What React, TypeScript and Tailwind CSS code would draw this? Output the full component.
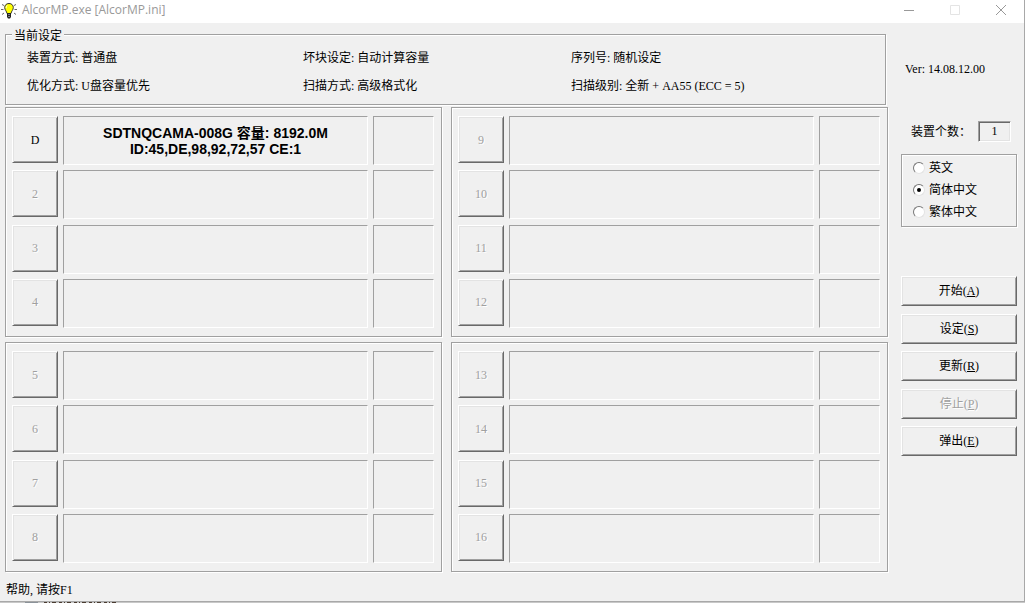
import { useState } from "react";
import type { ReactNode } from "react";

const etched =
  "border border-[#a0a0a0] shadow-[inset_1px_1px_0_#fff,1px_1px_0_#fff]";
const raised =
  "border border-t-white border-l-white border-r-[#696969] border-b-[#696969] shadow-[inset_1px_1px_0_#e3e3e3,inset_-1px_-1px_0_#a0a0a0]";
const sunken =
  "border border-t-[#a0a0a0] border-l-[#a0a0a0] border-r-white border-b-white";
const disabledText =
  "disabled:text-[#a0a0a0] disabled:[text-shadow:1px_1px_0_#fff]";

const settings = [
  ["装置方式", "普通盘"],
  ["坏块设定", "自动计算容量"],
  ["序列号", "随机设定"],
  ["优化方式", "U盘容量优先"],
  ["扫描方式", "高级格式化"],
  ["扫描级别", "全新 + AA55 (ECC = 5)"],
];

const panels = [
  ["D", "2", "3", "4"],
  ["9", "10", "11", "12"],
  ["5", "6", "7", "8"],
  ["13", "14", "15", "16"],
];

const languages = ["英文", "简体中文", "繁体中文"];

const actions = [
  { label: "开始", hotkey: "A", disabled: false },
  { label: "设定", hotkey: "S", disabled: false },
  { label: "更新", hotkey: "R", disabled: false },
  { label: "停止", hotkey: "P", disabled: true },
  { label: "弹出", hotkey: "E", disabled: false },
];

function BulbIcon() {
  return (
    <svg width="16" height="18" viewBox="0 0 16 18" aria-hidden="true">
      <path
        d="M1 3.500l2 1M0 8.500h2.500M1 13.500l2-1.500M15 3.500l-2 1M16 8.500h-2.500M15 13.500l-2-1.500"
        stroke="#666"
        strokeWidth="1"
        fill="none"
      />
      <path
        d="M8 2.500c-2.800 0-4.300 1.800-4.300 4 0 2.600 2 3.600 2.300 6h4c.3-2.400 2.300-3.400 2.300-6 0-2.200-1.500-4-4.300-4z"
        fill="#ffff00"
        stroke="#333"
        strokeWidth="1"
      />
      <path d="M6.200 4.500c-.9.800-1.100 1.700-.9 2.700" stroke="#fff" fill="none" />
      <path d="M6 12h4v4l-1 1.500H7L6 16z" fill="#222" />
      <path d="M7 13.500h2M7 15.500h2" stroke="#999" strokeWidth="0.800" />
    </svg>
  );
}

function CaptionButton({ label, children }: { label: string; children: ReactNode }) {
  return (
    <button
      type="button"
      aria-label={label}
      className="flex h-5 w-[46px] items-center justify-center"
    >
      <svg width="12" height="12" viewBox="0 0 12 12" fill="none" aria-hidden="true">
        {children}
      </svg>
    </button>
  );
}

function TitleBar() {
  return (
    <header className="flex h-[23px] shrink-0 items-start bg-white pl-[1px] text-[#999]">
      <div className="flex h-5 flex-1 items-center gap-[5px]">
        <BulbIcon />
        <h1 className="font-['Open_Sans','Noto_Sans',sans-serif] text-[12px] leading-5">
          AlcorMP.exe [AlcorMP.ini]
        </h1>
      </div>
      <CaptionButton label="最小化">
        <path d="M1 6.500h10" stroke="#999" />
      </CaptionButton>
      <CaptionButton label="最大化">
        <path d="M1.500 1.500h9v9h-9z" stroke="#e4e4e4" />
      </CaptionButton>
      <CaptionButton label="关闭">
        <path d="m1 1 10 10M11 1 1 11" stroke="#999" />
      </CaptionButton>
    </header>
  );
}

function Port({ name }: { name: string }) {
  const active = name === "D";
  return (
    <div className="grid h-[49px] grid-cols-[46px_1fr_61px] gap-[5px]">
      <button
        type="button"
        disabled={!active}
        className={`h-[47px] text-[12px] leading-4 ${raised} ${disabledText}`}
      >
        {name}
      </button>
      <div
        className={`flex flex-col items-center justify-center text-center font-['Liberation_Sans','Noto_Sans_CJK_SC',sans-serif] text-[14px] leading-4 font-bold ${sunken}`}
      >
        {active && (
          <>
            <p>SDTNQCAMA-008G 容量: 8192.0M</p>
            <p>ID:45,DE,98,92,72,57 CE:1</p>
          </>
        )}
      </div>
      <div className={sunken} />
    </div>
  );
}

function Sidebar() {
  const [language, setLanguage] = useState("简体中文");
  return (
    <aside className="w-[116px] shrink-0">
      <p className="mt-[25px] pl-1 leading-5">Ver: 14.08.12.00</p>
      <div className="mt-[42px] flex h-[21px] items-center justify-between pr-1.5 pl-2.5">
        <label htmlFor="device-count">装置个数：</label>
        <input
          id="device-count"
          readOnly
          value="1"
          className="h-[21px] w-[33px] border border-t-[#a0a0a0] border-r-white border-b-white border-l-[#a0a0a0] bg-transparent text-center shadow-[inset_1px_1px_0_#696969,inset_-1px_-1px_0_#e3e3e3] outline-none"
        />
      </div>
      <div
        role="radiogroup"
        aria-label="语言"
        className={`mt-3 pt-[2px] pb-[3px] pl-[11px] ${etched}`}
      >
        {languages.map((name) => (
          <label key={name} className="flex h-[22px] items-center gap-1">
            <input
              type="radio"
              name="language"
              checked={language === name}
              onChange={() => setLanguage(name)}
              className="grid size-3 appearance-none place-content-center rounded-full border border-t-[#777] border-r-[#e3e3e3] border-b-[#e3e3e3] border-l-[#777] bg-white checked:before:size-1 checked:before:rounded-full checked:before:bg-black checked:before:content-['']"
            />
            <span>{name}</span>
          </label>
        ))}
      </div>
      <div className="mt-[49px] flex h-[180px] flex-col justify-between">
        {actions.map(({ label, hotkey, disabled }) => (
          <button
            key={hotkey}
            type="button"
            disabled={disabled}
            className={`h-[30px] leading-4 ${raised} ${disabledText}`}
          >
            {label}(<u>{hotkey}</u>)
          </button>
        ))}
      </div>
    </aside>
  );
}

export default function App() {
  return (
    <div className="flex min-h-screen flex-col bg-[#f0f0f0] font-['Liberation_Serif','Noto_Sans_CJK_SC',serif] text-[12px] leading-4 text-black">
      <div className="flex flex-1 flex-col border-r border-b border-[#a8a8a8]">
        <TitleBar />
        <main className="flex gap-[13px] pt-[11px] pr-[7px] pl-[5px]">
          <div className="min-w-0 flex-1">
            <fieldset
              className={`relative mr-0.5 grid grid-cols-[276fr_268fr_314fr] pt-[9px] pb-1 pl-[21px] ${etched}`}
            >
              <legend className="absolute -top-[7px] left-1.5 bg-[#f0f0f0] px-0.5">
                当前设定
              </legend>
              {settings.map(([label, value]) => (
                <p key={label} className="leading-7">
                  {label}: {value}
                </p>
              ))}
            </fieldset>
            <div className="mt-0.5 grid grid-cols-2 gap-x-[9px] gap-y-[5px]">
              {panels.map((ports) => (
                <section
                  key={ports[0]}
                  className={`py-2 pr-[7px] pl-1.5 ${etched}`}
                >
                  <div className="flex h-[212px] flex-col justify-between">
                    {ports.map((name) => (
                      <Port key={name} name={name} />
                    ))}
                  </div>
                </section>
              ))}
            </div>
          </div>
          <Sidebar />
        </main>
        <footer className="mt-auto pb-[3px] pl-1.5 leading-4">帮助, 请按F1</footer>
      </div>
      <div className="h-px bg-[#c8c8c8]">
        <svg width="160" height="1" className="block" aria-hidden="true">
          <path d="M25 .5h13" stroke="#8b9299" />
          <path d="M44 .5h72" stroke="#4a3b30" strokeDasharray="3 2 1 2 4 3" />
        </svg>
      </div>
    </div>
  );
}
